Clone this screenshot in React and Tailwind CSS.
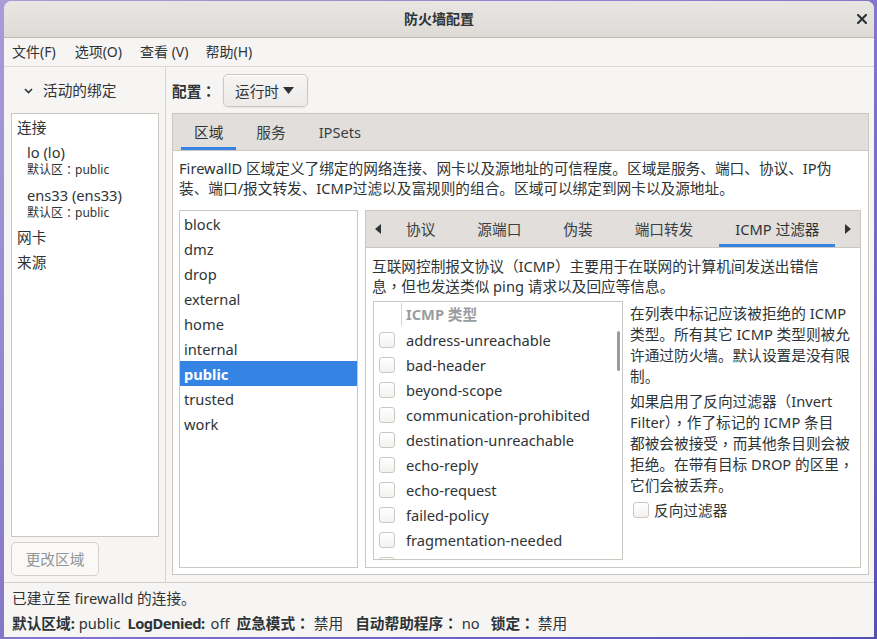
import React from "react";

function Check() {
  return (
    <span className="block w-[16px] h-[16px] shrink-0 rounded-[3px] border border-[#cdc7c2] bg-linear-to-b from-white to-[#f3f2f1]" />
  );
}

function C() {
  return <span className="align-top font-['Noto_Sans_CJK_TC',sans-serif]">：</span>;
}

function K() {
  return <span className="align-top font-['Noto_Sans_CJK_TC',sans-serif]">，</span>;
}

const zones = ["block", "dmz", "drop", "external", "home", "internal", "public", "trusted", "work"];
const icmp = [
  "address-unreachable",
  "bad-header",
  "beyond-scope",
  "communication-prohibited",
  "destination-unreachable",
  "echo-reply",
  "echo-request",
  "failed-policy",
  "fragmentation-needed",
  "host-precedence-violation",
];

export default function App() {
  return (
    <div className="w-[877px] h-[639px] overflow-hidden pl-[4px] pt-[1px] bg-linear-to-br from-[#a99cd8] via-[#8577c8] to-[#5650b4] font-['Noto_Sans','Noto_Sans_CJK_SC',sans-serif]">
      <div className="w-[870px] h-[636px] flex flex-col overflow-hidden rounded-t-[8px] bg-[#f6f5f4] text-[#2e3436] text-[14.67px] leading-[20px]">
        {/* Title bar */}
        <div className="h-[37px] shrink-0 flex items-center border-b border-[#bfb8b1] bg-linear-to-b from-[#e8e6e3] to-[#dedbd7]">
          <div className="w-[24px]" />
          <div className="flex-1 text-center font-bold text-[14px]">防火墙配置</div>
          <div className="w-[24px] flex items-center justify-center">
            <svg width="10" height="10" viewBox="0 0 10 10">
              <path d="M1 1 L9 9 M9 1 L1 9" stroke="#2e3436" strokeWidth="2.2" strokeLinecap="square" />
            </svg>
          </div>
        </div>
        {/* Menu bar */}
        <div className="h-[29px] shrink-0 flex items-center pl-[8px] border-b border-[#dcd8d4] text-[14px]">
          <span>文件(F)</span>
          <span className="ml-[19px]">选项(O)</span>
          <span className="ml-[18px]">查看 (V)</span>
          <span className="ml-[17px]">帮助(H)</span>
        </div>
        {/* Main */}
        <div className="flex-1 flex min-h-0">
          {/* Left panel */}
          <div className="w-[162px] shrink-0 border-r border-[#d8d4d0] flex flex-col pl-[7px]">
            <div className="h-[46px] flex items-center pl-[13px]">
              <svg width="9" height="6" viewBox="0 0 9 6" className="mt-[1px]">
                <path d="M1 1 L4.5 4.5 L8 1" fill="none" stroke="#2e3436" strokeWidth="1.6" />
              </svg>
              <span className="ml-[10px]">活动的绑定</span>
            </div>
            <div className="w-[148px] h-[424px] border border-[#cdc7c2] bg-white pl-[5px] pt-[1px]">
              <div className="leading-[24px]">连接</div>
              <div className="pl-[10px] mt-[3px] leading-[20px]">lo (lo)</div>
              <div className="pl-[10px] leading-[16px] text-[12px]">
                默认区<C />public
              </div>
              <div className="pl-[10px] mt-[7px] leading-[20px]">ens33 (ens33)</div>
              <div className="pl-[10px] leading-[16px] text-[12px]">
                默认区<C />public
              </div>
              <div className="mt-[4px] leading-[24px]">网卡</div>
              <div className="mt-[1px] leading-[24px]">来源</div>
            </div>
            <div className="mt-[5px] w-[88px] h-[34px] rounded-[5px] border border-[#d5d0cc] bg-[#faf9f8] text-[#929595] flex items-center justify-center">
              更改区域
            </div>
          </div>
          {/* Right panel */}
          <div className="flex-1 min-w-0 pl-[6px] pr-[5px] pt-[7px] flex flex-col">
            <div className="h-[33px] flex items-center">
              <span className="font-bold">
                配置<C />
              </span>
              <div className="ml-[7px] w-[85px] h-[33px] rounded-[5px] border border-[#cdc7c2] bg-linear-to-b from-[#f6f5f4] to-[#edebe9] shadow-[inset_0_1px_white,0_1px_2px_rgba(0,0,0,0.07)] flex items-center pl-[11px]">
                <span>运行时</span>
                <svg width="11" height="7" viewBox="0 0 11 7" className="ml-[4px]">
                  <path d="M0 0 L11 0 L5.5 7 Z" fill="#2e3436" />
                </svg>
              </div>
            </div>
            {/* Outer notebook */}
            <div className="mt-[6px] h-[462px] border border-[#cdc7c2] flex flex-col">
              <div className="h-[37px] shrink-0 border-b border-[#cdc7c2] bg-[#e1dedb] flex items-stretch pl-[8px] gap-[7px]">
                <div className="relative px-[13px] flex items-center">
                  区域
                  <span className="absolute left-0 right-0 bottom-0 h-[3px] bg-[#3584e4]" />
                </div>
                <div className="px-[13px] flex items-center text-[#3a4042]">服务</div>
                <div className="px-[13px] flex items-center text-[#3a4042]">IPSets</div>
              </div>
              <div className="flex-1 bg-white pl-[6px] pr-[7px] pt-[7px]">
                <div className="whitespace-nowrap leading-[20px]">
                  FirewallD 区域定义了绑定的网络连接、网卡以及源地址的可信程度。区域是服务、端口、协议、IP伪
                  <br />
                  装、端口/报文转发、ICMP过滤以及富规则的组合。区域可以绑定到网卡以及源地址。
                </div>
                <div className="mt-[12px] flex">
                  {/* Zone list */}
                  <div className="w-[179px] h-[358px] shrink-0 border border-[#cdc7c2] bg-white">
                    {zones.map((z) => (
                      <div
                        key={z}
                        className={
                          z === "public"
                            ? "h-[25px] flex items-center pl-[4px] bg-[#3584e4] text-white font-bold"
                            : "h-[25px] flex items-center pl-[4px]"
                        }
                      >
                        {z}
                      </div>
                    ))}
                  </div>
                  {/* Inner notebook */}
                  <div className="ml-[7px] w-[496px] h-[358px] shrink-0 border border-[#cdc7c2] flex flex-col">
                    <div className="h-[37px] shrink-0 border-b border-[#cdc7c2] bg-[#e1dedb] flex items-stretch overflow-hidden">
                      <div className="w-[24px] shrink-0 flex items-center justify-center">
                        <svg width="6" height="10" viewBox="0 0 6 10">
                          <path d="M6 0 L0 5 L6 10 Z" fill="#2e3436" />
                        </svg>
                      </div>
                      <div className="flex items-stretch gap-[10px] shrink-0">
                        <div className="px-[16px] flex items-center text-[#3a4042]">协议</div>
                        <div className="px-[16px] flex items-center text-[#3a4042]">源端口</div>
                        <div className="px-[16px] flex items-center text-[#3a4042]">伪装</div>
                        <div className="px-[16px] flex items-center text-[#3a4042]">端口转发</div>
                        <div className="relative px-[16px] flex items-center whitespace-nowrap">
                          ICMP 过滤器
                          <span className="absolute left-0 right-0 bottom-0 h-[3px] bg-[#3584e4]" />
                        </div>
                      </div>
                      <div className="flex-1 min-w-0 flex items-center justify-center">
                        <svg width="6" height="10" viewBox="0 0 6 10">
                          <path d="M0 0 L6 5 L0 10 Z" fill="#2e3436" />
                        </svg>
                      </div>
                    </div>
                    <div className="flex-1 bg-white pl-[6px] pt-[8px]">
                      <div className="whitespace-nowrap leading-[20px]">
                        互联网控制报文协议（ICMP）主要用于在联网的计算机间发送出错信
                        <br />
                        息<K />但也发送类似 ping 请求以及回应等信息。
                      </div>
                      <div className="mt-[5px] flex">
                        <div className="relative ml-[1px] w-[250px] h-[259px] shrink-0 border border-[#cdc7c2] bg-white overflow-hidden">
                          <div className="h-[25px] flex items-stretch">
                            <div className="w-[28px] border-r border-[#d8d4d0] my-[1px]" />
                            <div className="pl-[4px] pb-[2px] flex items-center font-bold text-[#9a9d9e]">ICMP 类型</div>
                          </div>
                          {icmp.map((t) => (
                            <div key={t} className="h-[25px] flex items-center pl-[5px]">
                              <Check />
                              <span className="ml-[11px] whitespace-nowrap">{t}</span>
                            </div>
                          ))}
                          <div className="absolute right-[2px] top-[29px] w-[3px] h-[40px] rounded-[2px] bg-[#9c9c9c]" />
                        </div>
                        <div className="ml-[7px] pt-[2px] whitespace-nowrap">
                          <div className="leading-[21px]">
                            在列表中标记应该被拒绝的 ICMP
                            <br />
                            类型。所有其它 ICMP 类型则被允
                            <br />
                            许通过防火墙。默认设置是没有限
                            <br />
                            制。
                          </div>
                          <div className="mt-[4px] leading-[21px]">
                            如果启用了反向过滤器（Invert
                            <br />
                            Filter）<K />作了标记的 ICMP 条目
                            <br />
                            都被会被接受<K />而其他条目则会被
                            <br />
                            拒绝。在带有目标 DROP 的区里<K />
                            <br />
                            它们会被丢弃。
                          </div>
                          <div className="mt-[3px] h-[21px] flex items-center pl-[3px]">
                            <Check />
                            <span className="ml-[5px]">反向过滤器</span>
                          </div>
                        </div>
                      </div>
                    </div>
                  </div>
                </div>
              </div>
            </div>
          </div>
        </div>
        {/* Status bar */}
        <div className="h-[55px] shrink-0 border-t border-[#d5d0cc] pl-[8px] pt-[5px]">
          <div className="leading-[20px]">已建立至 firewalld 的连接。</div>
          <div className="mt-[5px] leading-[20px] flex whitespace-nowrap">
            <b>默认区域:</b>
            <span className="ml-[4px]">public</span>
            <b className="ml-[7px] tracking-[-0.5px]">LogDenied:</b>
            <span className="ml-[6px]">off</span>
            <b className="ml-[7px]">
              应急模式<C />
            </b>
            <span className="ml-[4px]">禁用</span>
            <b className="ml-[12px]">
              自动帮助程序<C />
            </b>
            <span className="ml-[4px]">no</span>
            <b className="ml-[11px]">
              锁定<C />
            </b>
            <span className="ml-[3px]">禁用</span>
          </div>
        </div>
      </div>
    </div>
  );
}
